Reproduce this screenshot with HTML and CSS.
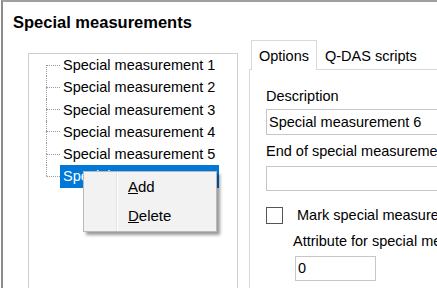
FILE: index.html
```html
<!DOCTYPE html>
<html lang="en">
<head>
  <meta charset="UTF-8">
  <title>Special measurements</title>
  <link rel="stylesheet" href="styles.css">
</head>
<body>
  <div class="frame">
    <h2 class="title">Special measurements</h2>
    <div class="main">
      <div class="tree">
        <ul class="tree-list">
          <li class="node first"><span class="branch"><span class="up"></span><span class="down"></span></span><span class="label">Special measurement 1</span></li>
          <li class="node"><span class="branch"><span class="up"></span><span class="down"></span></span><span class="label">Special measurement 2</span></li>
          <li class="node"><span class="branch"><span class="up"></span><span class="down"></span></span><span class="label">Special measurement 3</span></li>
          <li class="node"><span class="branch"><span class="up"></span><span class="down"></span></span><span class="label">Special measurement 4</span></li>
          <li class="node"><span class="branch"><span class="up"></span><span class="down"></span></span><span class="label">Special measurement 5</span></li>
          <li class="node last"><span class="branch"><span class="up"></span><span class="down"></span></span><span class="label selected">Special measurement 6</span></li>
        </ul>
      </div>

      <div class="tabs">
        <div class="tab-strip">
          <div class="tab active">Options</div>
          <div class="tab">Q-DAS scripts</div>
        </div>
        <div class="tab-page">
          <div class="field-label">Description</div>
          <div class="textbox wide">Special measurement 6</div>

          <div class="field-label spaced">End of special measurement</div>
          <div class="textbox wide short"></div>

          <div class="check-row">
            <span class="checkbox"></span>
            <span class="check-text">Mark special measurement values</span>
          </div>
          <div class="field-label sub">Attribute for special measurement values</div>
          <div class="textbox small">0</div>
        </div>
      </div>
    </div>
  </div>

  <!-- context menu opened on the selected node -->
  <div class="context-menu">
    <div class="menu-gutter"></div>
    <div class="menu-items">
      <div class="menu-item"><u>A</u>dd</div>
      <div class="menu-item"><u>D</u>elete</div>
    </div>
  </div>
</body>
</html>
```

FILE: styles.css
```css
body {
  margin: 0;
  width: 437px;
  height: 288px;
  overflow: hidden;
  background-color: #ffffff;
  font-family: "Liberation Sans", Arial, sans-serif;
  font-size: 14.5px;
  color: #000;
}
.frame {
  margin-left: 1px;
  height: 286px;
  border-top: 2px solid #a0a0a0;
  border-left: 2px solid #8c8c8c;
}
.title {
  margin: 10px 0 0 0;
  padding-left: 10px;
  font-size: 16.5px;
  line-height: 20px;
  font-weight: bold;
  white-space: nowrap;
}
.main {
  display: flex;
  align-items: flex-start;
  margin-top: 8px;
}

/* tree */
.tree {
  margin: 13px 0 0 25px;
  width: 210px;
  height: 260px;
  box-sizing: border-box;
  border: 1px solid #cfcfcf;
  background-color: #fff;
  flex-shrink: 0;
}
.tree-list {
  list-style: none;
  margin: 0;
  padding: 0 0 0 17px;
}
.node {
  display: flex;
  height: 22.25px;
  line-height: 22.25px;
}
.branch {
  display: flex;
  flex-direction: column;
  width: 14px;
  flex-shrink: 0;
}
.up,
.down {
  flex: 1;
  border-left: 1px dotted #9a9a9a;
}
.down {
  border-top: 1px dotted #9a9a9a;
}
.first .up,
.last .down {
  border-left-color: transparent;
}
.label {
  padding: 0 4px 0 3px;
  white-space: nowrap;
}
.label.selected {
  background-color: #0078d7;
  color: #fff;
}

/* tabs */
.tabs {
  margin-left: 11px;
  width: 280px;
  flex-shrink: 0;
}
.tab-strip {
  display: flex;
  align-items: flex-end;
  height: 29px;
  padding-left: 2px;
}
.tab {
  padding: 6px 8px 3px 8px;
  line-height: 20px;
  white-space: nowrap;
}
.tab.active {
  position: relative;
  z-index: 1;
  padding: 5px 7px 4px 7px;
  margin-bottom: -1px;
  border: 1px solid #d9d9d9;
  border-bottom: none;
  background-color: #fff;
}
.tab-page {
  height: 230px;
  border: 1px solid #d9d9d9;
  padding: 16px 0 0 16px;
  background-color: #fff;
}
.field-label {
  line-height: 20px;
  margin-bottom: 3px;
  white-space: nowrap;
}
.field-label.spaced {
  margin-top: 6px;
  margin-bottom: 5px;
}
.field-label.sub {
  margin: 6px 0 5px 27px;
}
.textbox {
  box-sizing: border-box;
  border: 1px solid #c6c6c6;
  background-color: #fff;
  padding-left: 2px;
  white-space: nowrap;
  overflow: hidden;
}
.textbox.wide {
  width: 240px;
  height: 26px;
  line-height: 24px;
}
.textbox.wide.short {
  height: 25px;
}
.textbox.small {
  margin-left: 29px;
  width: 81px;
  height: 25px;
  line-height: 22px;
}
.check-row {
  display: flex;
  align-items: center;
  height: 20px;
  margin-top: 14px;
}
.checkbox {
  width: 17px;
  height: 17px;
  box-sizing: border-box;
  border: 1px solid #555;
  background-color: #fff;
  flex-shrink: 0;
}
.check-text {
  margin-left: 14px;
  line-height: 20px;
  white-space: nowrap;
}

/* context menu */
.context-menu {
  position: absolute;
  left: 83px;
  top: 171px;
  width: 134px;
  box-sizing: border-box;
  display: flex;
  border: 1px solid #b9b9b9;
  background-color: #f2f2f2;
  box-shadow: 3px 3px 3px rgba(0, 0, 0, 0.4);
  font-size: 15px;
}
.menu-gutter {
  width: 32px;
  border-right: 1px solid #e2e2e2;
  box-shadow: 1px 0 0 #fff;
}
.menu-items {
  padding: 0 0 1px 11px;
}
.menu-item {
  height: 29px;
  line-height: 29px;
}
```
